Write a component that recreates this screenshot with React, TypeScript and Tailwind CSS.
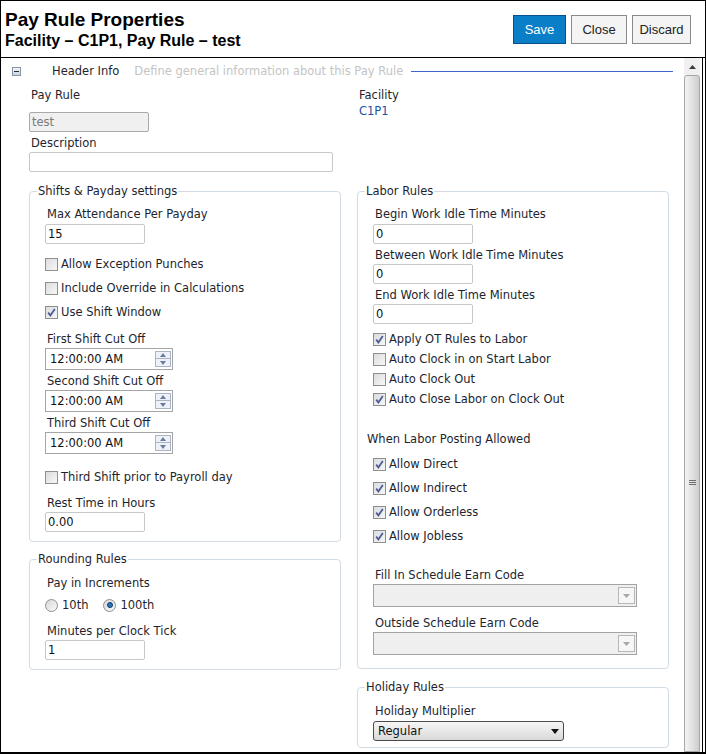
import type { ReactNode } from "react";

function Label({ children, className = "" }: { children: ReactNode; className?: string }) {
  return <div className={`ml-[2px] text-[11.5px] leading-[13px] text-[#231f2e] ${className}`}>{children}</div>;
}

function TextBox({ value, className = "" }: { value: string; className?: string }) {
  return (
    <div
      className={`h-[20px] rounded-[2px] border border-[#c8c8c8] bg-white px-[2px] text-[11.5px] leading-[18px] text-[#111] ${className}`}
    >
      {value}
    </div>
  );
}

function Check({ checked }: { checked?: boolean }) {
  return (
    <span className="flex h-[13px] w-[13px] shrink-0 items-center justify-center border border-[#8e8f8f] bg-gradient-to-br from-[#dcdcdc] to-[#f7f7f7]">
      {checked ? (
        <svg width="11" height="11" viewBox="0 0 11 11">
          <path d="M2.2 5.6 L4.4 8.4 L8.8 2" fill="none" stroke="#4b5c96" strokeWidth="1.8" />
        </svg>
      ) : null}
    </span>
  );
}

function CheckRow({ label, checked, className = "" }: { label: string; checked?: boolean; className?: string }) {
  return (
    <div className={`flex items-center gap-[3px] text-[11.5px] leading-[13px] text-[#231f2e] ${className}`}>
      <Check checked={checked} />
      <span>{label}</span>
    </div>
  );
}

function Radio({ checked }: { checked?: boolean }) {
  return (
    <span className="flex h-[13px] w-[13px] shrink-0 items-center justify-center rounded-full border border-[#8e8e8e] bg-gradient-to-br from-[#d8d8d8] to-[#fafafa]">
      {checked ? <span className="h-[6px] w-[6px] rounded-full border border-[#103a66] bg-[#2a78c2]" /> : null}
    </span>
  );
}

function TimeBox({ className = "" }: { className?: string }) {
  return (
    <div className={`flex h-[22px] w-[128px] items-center border border-[#a5a5a5] bg-white pl-[4px] pr-[1px] ${className}`}>
      <span className="flex-1 text-[11.5px] leading-[13px] text-[#111]">12:00:00 AM</span>
      <div className="flex flex-col">
        <div className="flex h-[8px] w-[16px] items-center justify-center border border-[#a9b4c6] bg-[#eef2f7]">
          <svg width="6" height="4" viewBox="0 0 6 4">
            <path d="M0 4 L3 0 L6 4 Z" fill="#6a7ba0" />
          </svg>
        </div>
        <div className="flex h-[8px] w-[16px] items-center justify-center border border-t-0 border-[#a9b4c6] bg-[#eef2f7]">
          <svg width="6" height="4" viewBox="0 0 6 4">
            <path d="M0 0 L3 4 L6 0 Z" fill="#6a7ba0" />
          </svg>
        </div>
      </div>
    </div>
  );
}

function DisabledSelect({ className = "" }: { className?: string }) {
  return (
    <div className={`flex h-[23px] w-[264px] items-center justify-end border border-[#a3a3a3] bg-[#efefef] pr-[1px] ${className}`}>
      <div className="flex h-[17px] w-[17px] items-center justify-center border border-[#b8b8b8] bg-[#f6f6f6]">
        <svg width="7" height="4" viewBox="0 0 7 4">
          <path d="M0 0 L3.5 4 L7 0 Z" fill="#a8a8a8" />
        </svg>
      </div>
    </div>
  );
}

function Group({ title, children, className = "" }: { title: string; children: ReactNode; className?: string }) {
  return (
    <fieldset className={`rounded-[4px] border border-[#d3dbe4] ${className}`}>
      <legend className="ml-[7px] px-[1px] text-[11.5px] leading-[13px] text-[#231f2e]">{title}</legend>
      {children}
    </fieldset>
  );
}

function Scrollbar() {
  return (
    <div className="flex w-[16px] flex-col bg-[#f0f0f0]">
      <div className="flex h-[17px] items-center justify-center">
        <svg width="7" height="4" viewBox="0 0 7 4">
          <path d="M0 4 L3.5 0 L7 4 Z" fill="#3c3c3c" />
        </svg>
      </div>
      <div className="flex flex-1 flex-col items-center rounded-t-[3px] border border-[#a6a6a6] bg-gradient-to-r from-[#f2f2f2] via-[#e2e2e2] to-[#cdcdcd]">
        <div className="h-[404px]" />
        <div className="flex flex-col gap-[1px]">
          <span className="h-px w-[7px] bg-[#6e6e6e]" />
          <span className="h-px w-[7px] bg-[#6e6e6e]" />
          <span className="h-px w-[7px] bg-[#6e6e6e]" />
        </div>
      </div>
    </div>
  );
}

export default function App() {
  return (
    <div className="flex h-[754px] w-[706px] flex-col overflow-hidden border border-b-2 border-black bg-white font-['DejaVu_Sans',Verdana,sans-serif] text-[#231f2e]">
      <header className="flex shrink-0 items-start justify-between border-b border-black pb-[5px] pl-[4px] pr-[14px] pt-[8px]">
        <div className="font-['Liberation_Sans',Arial,sans-serif] font-bold text-black">
          <div className="text-[19px] leading-[21px]">Pay Rule Properties</div>
          <div className="text-[16px] leading-[22px]">Facility – C1P1, Pay Rule – test</div>
        </div>
        <div className="mt-[6px] flex gap-[5px] font-['Liberation_Sans',Arial,sans-serif] text-[13px]">
          <button type="button" className="h-[29px] w-[53px] border border-[#0b4f8a] bg-[#0b7ec8] text-white">
            Save
          </button>
          <button type="button" className="h-[29px] w-[56px] border border-[#8a8a8a] bg-[#f4f4f4] text-[#222]">
            Close
          </button>
          <button type="button" className="h-[29px] w-[59px] border border-[#8a8a8a] bg-[#f4f4f4] text-[#222]">
            Discard
          </button>
        </div>
      </header>

      <div className="flex min-h-0 flex-1">
        <main className="min-w-0 flex-1 overflow-hidden">
          <div className="flex h-[26px] items-center pr-[11px] text-[11.5px] leading-[13px]">
            <span className="ml-[11px] flex h-[9px] w-[9px] items-center justify-center border border-[#8797a8] bg-gradient-to-b from-[#f3f6f9] to-[#c9d4df]">
              <span className="h-px w-[5px] bg-[#2c2c2c]" />
            </span>
            <span className="ml-[31px] text-[#231f2e]">Header Info</span>
            <span className="ml-[15px] text-[#c4c4c4]">Define general information about this Pay Rule</span>
            <span className="ml-[8px] h-px flex-1 bg-[#3f64cc]" />
          </div>

          <div className="mt-[4.5px] grid grid-cols-[312px_312px] gap-x-[16px] pl-[28px]">
            <div>
              <Label>Pay Rule</Label>
              <div className="mt-[10.5px] h-[20px] w-[120px] rounded-[2px] border border-[#a9a9a9] bg-[#f0f0f0] px-[2px] text-[11.5px] leading-[18px] text-[#7a7a7a]">
                test
              </div>
              <Label className="mt-[4.5px]">Description</Label>
              <TextBox value="" className="mt-[2.5px] w-[304px]" />
            </div>
            <div>
              <Label>Facility</Label>
              <div className="ml-[2px] mt-[3px] text-[11.5px] leading-[13px] text-[#1f4fa8]">C1P1</div>
            </div>
          </div>

          <div className="mt-[12.5px] grid grid-cols-[312px_312px] gap-x-[16px] pl-[28px]">
            <div className="flex flex-col">
              <Group title="Shifts & Payday settings">
                <div className="pb-[9px] pl-[15px] pt-[10px]">
                  <Label>Max Attendance Per Payday</Label>
                  <TextBox value="15" className="mt-[3.5px] w-[100px]" />
                  <CheckRow label="Allow Exception Punches" className="mt-[8px] h-[24px]" />
                  <CheckRow label="Include Override in Calculations" className="h-[24px]" />
                  <CheckRow label="Use Shift Window" checked className="h-[24px]" />
                  <Label className="mt-[8.5px]">First Shift Cut Off</Label>
                  <TimeBox className="mt-[2.5px]" />
                  <Label className="mt-[4.5px]">Second Shift Cut Off</Label>
                  <TimeBox className="mt-[2.5px]" />
                  <Label className="mt-[4.5px]">Third Shift Cut Off</Label>
                  <TimeBox className="mt-[2.5px]" />
                  <CheckRow label="Third Shift prior to Payroll day" className="mt-[11px] h-[24px]" />
                  <Label className="mt-[7.5px]">Rest Time in Hours</Label>
                  <TextBox value="0.00" className="mt-[2.5px] w-[100px]" />
                </div>
              </Group>

              <Group title="Rounding Rules" className="mt-[10.5px]">
                <div className="pb-[9px] pl-[15px] pt-[11px]">
                  <Label>Pay in Increments</Label>
                  <div className="mt-[5.5px] flex h-[20px] items-center text-[11.5px] leading-[13px]">
                    <Radio />
                    <span className="ml-[4px]">10th</span>
                    <span className="ml-[15px]">
                      <Radio checked />
                    </span>
                    <span className="ml-[4px]">100th</span>
                  </div>
                  <Label className="mt-[9.5px]">Minutes per Clock Tick</Label>
                  <TextBox value="1" className="mt-[2.5px] w-[100px]" />
                </div>
              </Group>
            </div>

            <div className="flex flex-col">
              <Group title="Labor Rules">
                <div className="pb-[13px] pl-[15px] pt-[10.5px]">
                  <Label>Begin Work Idle Time Minutes</Label>
                  <TextBox value="0" className="mt-[3px] w-[100px]" />
                  <Label className="mt-[4.5px]">Between Work Idle Time Minutes</Label>
                  <TextBox value="0" className="mt-[2.5px] w-[100px]" />
                  <Label className="mt-[4.5px]">End Work Idle Time Minutes</Label>
                  <TextBox value="0" className="mt-[2.5px] w-[100px]" />
                  <CheckRow label="Apply OT Rules to Labor" checked className="mt-[5px] h-[20px]" />
                  <CheckRow label="Auto Clock in on Start Labor" className="h-[20px]" />
                  <CheckRow label="Auto Clock Out" className="h-[20px]" />
                  <CheckRow label="Auto Close Labor on Clock Out" checked className="h-[20px]" />
                  <div className="-ml-[6px] mt-[23.5px] text-[11.5px] leading-[13px] text-[#231f2e]">When Labor Posting Allowed</div>
                  <CheckRow label="Allow Direct" checked className="mt-[6.5px] h-[24px]" />
                  <CheckRow label="Allow Indirect" checked className="h-[24px]" />
                  <CheckRow label="Allow Orderless" checked className="h-[24px]" />
                  <CheckRow label="Allow Jobless" checked className="h-[24px]" />
                  <Label className="mt-[20.5px]">Fill In Schedule Earn Code</Label>
                  <DisabledSelect className="mt-[2.5px]" />
                  <Label className="mt-[9.5px]">Outside Schedule Earn Code</Label>
                  <DisabledSelect className="mt-[2.5px]" />
                </div>
              </Group>

              <Group title="Holiday Rules" className="mt-[11.5px]">
                <div className="pb-[6px] pl-[15px] pt-[11px]">
                  <Label>Holiday Multiplier</Label>
                  <div className="mt-[3.5px] flex h-[20px] w-[191px] items-center rounded-[3px] border border-[#4a4a4a] bg-gradient-to-b from-[#f6f6f6] to-[#d9d9d9] pl-[4px] pr-[4px]">
                    <span className="flex-1 text-[11.5px] leading-[13px] text-[#111]">Regular</span>
                    <svg width="8" height="5" viewBox="0 0 8 5">
                      <path d="M0 0 L4 5 L8 0 Z" fill="#111" />
                    </svg>
                  </div>
                </div>
              </Group>
            </div>
          </div>
        </main>
        <Scrollbar />
        <div className="w-[2px]" />
        <div className="w-px bg-black" />
        <div className="w-[2px]" />
      </div>
    </div>
  );
}
